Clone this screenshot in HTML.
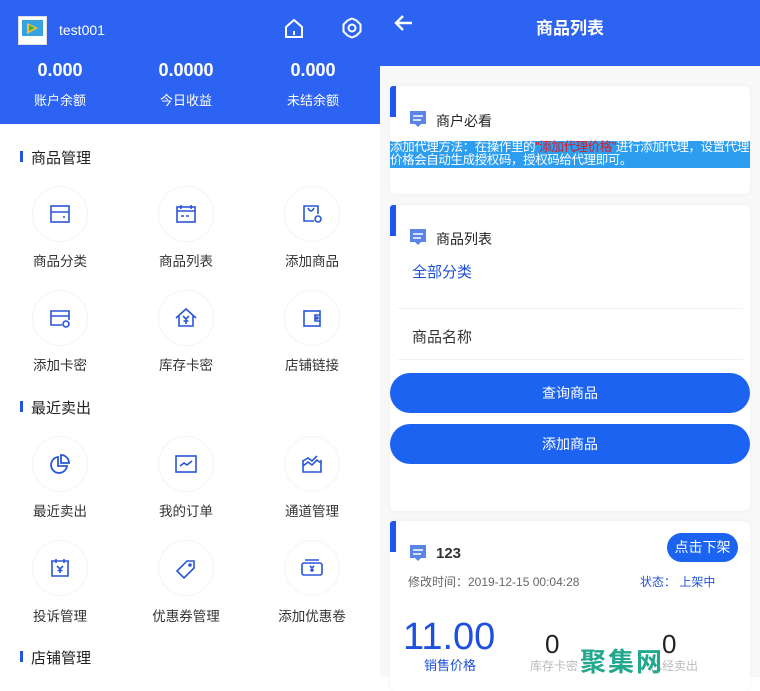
<!DOCTYPE html>
<html><head><meta charset="utf-8"><style>
*{margin:0;padding:0;box-sizing:border-box}
body{width:760px;height:677px;overflow:hidden;font-family:"Liberation Sans","Noto Sans CJK SC",sans-serif;background:#fff;position:relative}
.a{position:absolute}
.c{text-align:center}
.circ{position:absolute;width:56px;height:56px;border-radius:50%;border:1px solid #f4f4f6;display:flex;align-items:center;justify-content:center}
.lab{position:absolute;width:100px;text-align:center;font-size:13.5px;color:#333}
.sec{position:absolute;left:20px;font-size:15px;color:#222;padding-left:11px}
.sec:before{content:"";position:absolute;left:0;top:4px;width:3px;height:11px;background:#2255e0}
.card{position:absolute;left:390px;width:360px;background:#fff;border-radius:6px;box-shadow:0 0 4px rgba(0,0,0,.05)}
.acc{position:absolute;left:0;top:0;width:6px;height:31px;background:#1f55f0;border-radius:3px 0 0 0}
.btn{position:absolute;left:390px;width:360px;height:40px;border-radius:20px;background:#1d63f2;color:#fff;font-size:14px;text-align:center;line-height:40px}
</style></head><body>
<!-- left -->
<div class="a" style="left:0;top:0;width:380px;height:124px;background:#2d63f3"></div>
<div class="a" style="left:18px;top:16px;width:29px;height:29px;background:#fff;border:1px solid #ddd"><svg width="27" height="27"><rect x="3" y="3" width="21" height="16" fill="#36a3e0"/><polygon points="8,6 19,11 8,17" fill="#f6c23a"/><polygon points="10,8 16,11 10,14" fill="#3ab54a"/></svg></div>
<div class="a" style="left:59px;top:22px;color:#fff;font-size:14px">test001</div>
<svg class="a" style="left:283px;top:18px" width="22" height="22" fill="none" stroke="#fff" stroke-width="2"><path d="M3 9 L11 2 L19 9 V19 H3 Z"/><path d="M11 13 V17"/></svg>
<svg class="a" style="left:341px;top:17px" width="22" height="22" fill="none" stroke="#fff" stroke-width="2"><path d="M11 1.5 L15.5 3.5 L19.5 7.5 L19.5 14.5 L15.5 18.5 L11 20.5 L6.5 18.5 L2.5 14.5 L2.5 7.5 L6.5 3.5 Z"/><circle cx="11" cy="11" r="3.5"/></svg>
<div class="a c" style="left:10px;top:60px;width:100px;color:#fff;font-size:18px;font-weight:bold">0.000</div>
<div class="a c" style="left:136px;top:60px;width:100px;color:#fff;font-size:18px;font-weight:bold">0.0000</div>
<div class="a c" style="left:263px;top:60px;width:100px;color:#fff;font-size:18px;font-weight:bold">0.000</div>
<div class="a c" style="left:10px;top:90px;width:100px;color:#fff;font-size:13px">账户余额</div>
<div class="a c" style="left:136px;top:90px;width:100px;color:#fff;font-size:13px">今日收益</div>
<div class="a c" style="left:263px;top:90px;width:100px;color:#fff;font-size:13px">未结余额</div>

<div class="sec" style="top:147px">商品管理</div>
<div class="sec" style="top:397px">最近卖出</div>
<div class="sec" style="top:647px">店铺管理</div>

<div class="circ" style="left:32px;top:186px"><svg width="24" height="24" fill="none" stroke="#2a55d8" stroke-width="1.6"><rect x="3" y="4" width="18" height="16"/><path d="M3 10H21M15 15h2"/></svg></div>
<div class="circ" style="left:158px;top:186px"><svg width="24" height="24" fill="none" stroke="#2a55d8" stroke-width="1.6"><rect x="3" y="5" width="18" height="15"/><path d="M3 9H21M7 3v4M17 3v4M7 14h3M12 14h3"/></svg></div>
<div class="circ" style="left:284px;top:186px"><svg width="24" height="24" fill="none" stroke="#2a55d8" stroke-width="1.6"><path d="M14 19H4V4h14v8"/><path d="M8 6q3 6 6 0"/><circle cx="18" cy="17" r="3"/></svg></div>
<div class="circ" style="left:32px;top:290px"><svg width="24" height="24" fill="none" stroke="#2a55d8" stroke-width="1.6"><path d="M14 19H3V5h18v9M3 10H21"/><circle cx="18" cy="18" r="3"/></svg></div>
<div class="circ" style="left:158px;top:290px"><svg width="24" height="24" fill="none" stroke="#2a55d8" stroke-width="1.6"><path d="M2 12L12 3L22 12M5 10v10h14V10M9 10l3 3 3-3M12 13v5M9.5 15h5"/></svg></div>
<div class="circ" style="left:284px;top:290px"><svg width="24" height="24" fill="none" stroke="#2a55d8" stroke-width="1.6"><rect x="4" y="5" width="16" height="15"/><path d="M20 9h-5v6h5"/><circle cx="17" cy="12" r="1"/></svg></div>
<div class="circ" style="left:32px;top:436px"><svg width="24" height="24" fill="none" stroke="#2a55d8" stroke-width="1.8"><path d="M10 5a8 8 0 1 0 9 9h-9z"/><path d="M13 3a8 8 0 0 1 8 8h-8z"/></svg></div>
<div class="circ" style="left:158px;top:436px"><svg width="24" height="24" fill="none" stroke="#2a55d8" stroke-width="1.6"><rect x="2" y="4" width="20" height="16"/><path d="M6 14l4-3 3 2 5-4"/></svg></div>
<div class="circ" style="left:284px;top:436px"><svg width="24" height="24" fill="none" stroke="#2a55d8" stroke-width="1.6"><path d="M3 8v12h18V8M3 14l5-4 4 3 5-5 4 3M3 9l5-3 4 3 5-5"/></svg></div>
<div class="circ" style="left:32px;top:540px"><svg width="24" height="24" fill="none" stroke="#2a55d8" stroke-width="1.6"><path d="M3 5h18M4 5v15h16V5M8 3v4M16 3v4M9 10l3 3 3-3M12 13v4M9.5 14.5h5"/></svg></div>
<div class="circ" style="left:158px;top:540px"><svg width="24" height="24" fill="none" stroke="#2a55d8" stroke-width="1.6"><path d="M3 15L13 5h7v7L10 22z"/><circle cx="16" cy="9" r="1"/></svg></div>
<div class="circ" style="left:284px;top:540px"><svg width="24" height="24" fill="none" stroke="#2a55d8" stroke-width="1.6"><rect x="2" y="7" width="20" height="12" rx="2"/><path d="M5 4h14M10 10l2 2 2-2M12 12v4M10 14h4"/></svg></div>

<div class="lab" style="left:10px;top:250px">商品分类</div>
<div class="lab" style="left:136px;top:250px">商品列表</div>
<div class="lab" style="left:262px;top:250px">添加商品</div>
<div class="lab" style="left:10px;top:354px">添加卡密</div>
<div class="lab" style="left:136px;top:354px">库存卡密</div>
<div class="lab" style="left:262px;top:354px">店铺链接</div>
<div class="lab" style="left:10px;top:500px">最近卖出</div>
<div class="lab" style="left:136px;top:500px">我的订单</div>
<div class="lab" style="left:262px;top:500px">通道管理</div>
<div class="lab" style="left:10px;top:605px">投诉管理</div>
<div class="lab" style="left:136px;top:605px">优惠券管理</div>
<div class="lab" style="left:262px;top:605px">添加优惠卷</div>

<!-- right -->
<div class="a" style="left:380px;top:0;width:380px;height:677px;background:#f8f8f9"></div>
<div class="a" style="left:380px;top:0;width:380px;height:66px;background:#2d63f3"></div>
<svg class="a" style="left:393px;top:13px" width="22" height="20" fill="none" stroke="#fff" stroke-width="2.4"><path d="M19 10H3M10 3L3 10l7 7"/></svg>
<div class="a c" style="left:380px;top:14px;width:380px;color:#fff;font-size:17px;font-weight:bold">商品列表</div>

<div class="card" style="top:86px;height:108px"><div class="acc"></div></div>
<svg class="a" style="left:408px;top:109px" width="20" height="20"><path d="M2 2h16v13h-5l-3 3-3-3H2z" fill="#5b84e8"/><path d="M5 7h10M5 11h8" stroke="#fff" stroke-width="1.6"/></svg>
<div class="a" style="left:436px;top:111px;font-size:14px;color:#222">商户必看</div>
<div class="a" style="left:390px;top:141px;width:360px;height:27px;background:#2d9df0;color:#fff;font-size:12.5px;line-height:13px;letter-spacing:-.4px">添加代理方法：在操作里的<span style="color:#d21d2c">"添加代理价格"</span>进行添加代理，设置代理价格会自动生成授权码，授权码给代理即可。</div>

<div class="card" style="top:205px;height:306px"><div class="acc"></div></div>
<svg class="a" style="left:408px;top:227px" width="20" height="20"><path d="M2 2h16v13h-5l-3 3-3-3H2z" fill="#5b84e8"/><path d="M5 7h10M5 11h8" stroke="#fff" stroke-width="1.6"/></svg>
<div class="a" style="left:436px;top:229px;font-size:14px;color:#222">商品列表</div>
<div class="a" style="left:412px;top:261px;font-size:15px;color:#1d4fd8">全部分类</div>
<div class="a" style="left:398px;top:308px;width:345px;height:1px;background:#f2f2f2"></div>
<div class="a" style="left:412px;top:326px;font-size:15px;color:#333">商品名称</div>
<div class="a" style="left:398px;top:359px;width:345px;height:1px;background:#f2f2f2"></div>
<div class="btn" style="top:373px">查询商品</div>
<div class="btn" style="top:424px">添加商品</div>

<div class="card" style="top:521px;height:170px"><div class="acc"></div></div>
<svg class="a" style="left:408px;top:543px" width="20" height="20"><path d="M2 2h16v13h-5l-3 3-3-3H2z" fill="#5b84e8"/><path d="M5 7h10M5 11h8" stroke="#fff" stroke-width="1.6"/></svg>
<div class="a" style="left:436px;top:545px;font-size:15px;font-weight:bold;color:#333">123</div>
<div class="a c" style="left:667px;top:533px;width:71px;height:29px;border-radius:15px;background:#1d63f2;color:#fff;font-size:14px;line-height:29px">点击下架</div>
<div class="a" style="left:408px;top:573px;font-size:12px;color:#666">修改时间：2019-12-15 00:04:28</div>
<div class="a" style="left:640px;top:573px;font-size:12px;color:#2455d8">状态：&nbsp;上架中</div>
<div class="a" style="left:403px;top:616px;font-size:38px;color:#1d4fe0">11.00</div>
<div class="a" style="left:424px;top:655px;font-size:13px;color:#1d4fd8">销售价格</div>
<div class="a" style="left:545px;top:629px;font-size:26px;color:#222">0</div>
<div class="a" style="left:662px;top:629px;font-size:26px;color:#222">0</div>
<div class="a" style="left:530px;top:657px;font-size:12px;color:#bbb">库存卡密</div>
<div class="a" style="left:650px;top:657px;font-size:12px;color:#bbb">已经卖出</div>
<div class="a" style="left:580px;top:642px;font-size:26px;font-weight:bold;color:#22a88e;letter-spacing:2px">聚集网</div>
</body></html>
